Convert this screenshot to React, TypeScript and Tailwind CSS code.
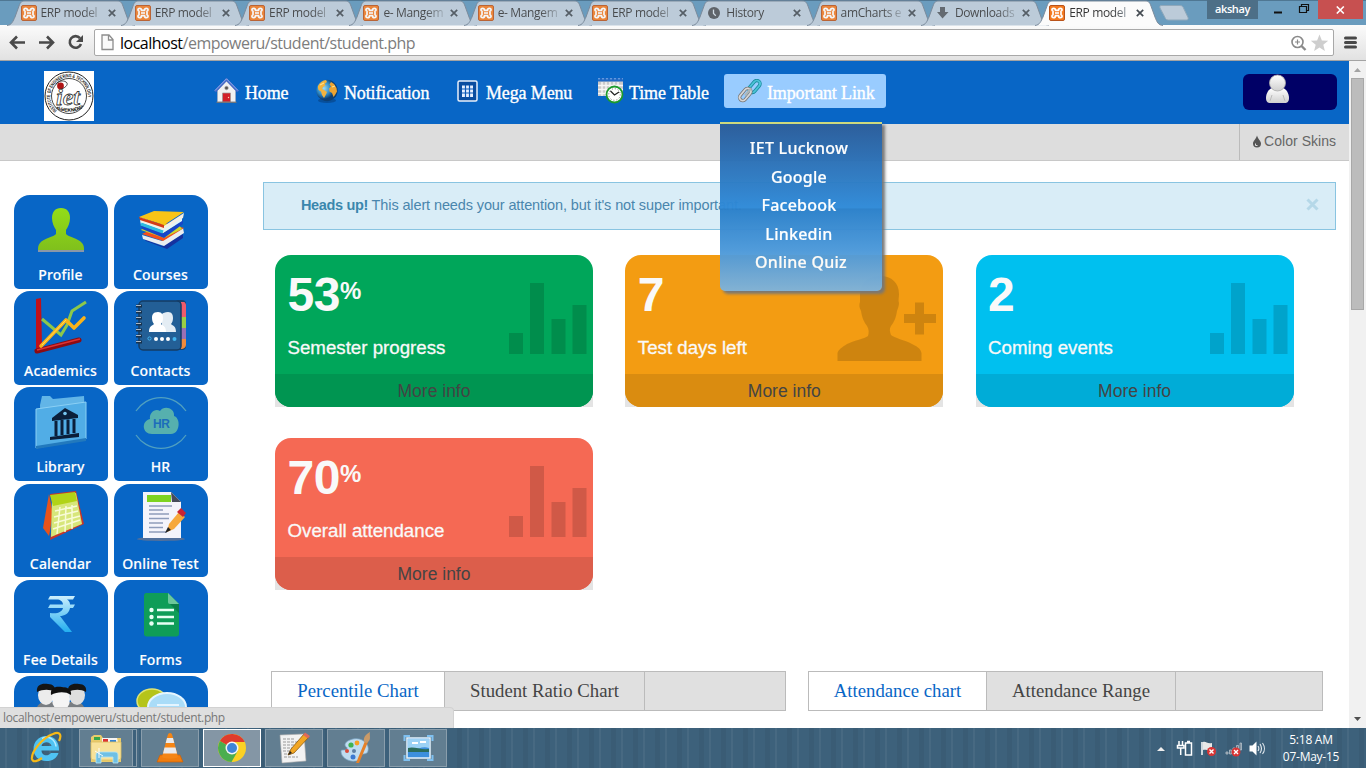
import React from "react";

type Kids = { children?: React.ReactNode };

const TAB_SHAPE = "M-1 25.5 C4 25 5 21 7 17 L11 6 C12.500 2 13.500 1 17 1 L109 1 C112.500 1 113.500 2 115 6 L119 17 C121 22 122 25 127 25.500";

function XamppIcon() {
  return (
    <svg width="16" height="16" viewBox="0 0 16 16" className="shrink-0">
      <rect x=".5" y=".5" width="15" height="15" rx="1.5" fill="#f47a20" stroke="#b9531a" />
      <path d="M4.500 3.300c-2 0-2 2.400-.5 3v3.400c-1.500.6-1.500 3 .5 3 1.300 0 2-1 2-2h3c0 1 .7 2 2 2 2 0 2-2.400.5-3V6.300c1.500-.6 1.500-3-.5-3-1.300 0-2 1-2 2h-3c0-1-.7-2-2-2z" fill="none" stroke="#fff" strokeWidth="1.700" />
      <path d="M6 8h4" stroke="#fff" strokeWidth="1.600" />
    </svg>
  );
}

function ClockIcon() {
  return (
    <svg width="16" height="16" viewBox="0 0 16 16" className="shrink-0">
      <circle cx="8" cy="8" r="6" fill="#4f5357" />
      <path d="M7.500 4.500v4l2.300 2.200" stroke="#d5dee6" strokeWidth="1.300" fill="none" />
    </svg>
  );
}

function DownIcon() {
  return (
    <svg width="16" height="16" viewBox="0 0 16 16" className="shrink-0">
      <path d="M5 2h5v5h3.500L7.500 13.500 2 7h3z" fill="#555a5f" />
    </svg>
  );
}

function CloseX() {
  return (
    <svg width="8" height="8" viewBox="0 0 8 8" className="shrink-0">
      <path d="M.8.8l6.400 6.400M7.200.8L.8 7.200" stroke="#444b52" strokeWidth="1.700" />
    </svg>
  );
}

const tabs = [
  { t: "ERP model", i: "x" },
  { t: "ERP model", i: "x" },
  { t: "ERP model", i: "x" },
  { t: "e- Mangem", i: "x" },
  { t: "e- Mangem", i: "x" },
  { t: "ERP model", i: "x" },
  { t: "History", i: "c" },
  { t: "amCharts e", i: "x" },
  { t: "Downloads", i: "d" },
  { t: "ERP model", i: "x", active: true },
];

function TabStrip() {
  return (
    <div className="flex h-[25px] w-full shrink-0 border-t border-[#4f7793] bg-[#6a9cbe] pl-[7.500px] font-['Open_Sans','Noto_Sans',sans-serif]">
      {tabs.map((tab, n) => (
        <div key={n} className="relative flex h-[24px] w-[114.3px] shrink-0 items-center pl-[13px]">
          <svg className="absolute -top-px left-0 overflow-visible" width="126" height="26" viewBox="0 0 126 26">
            <path d={TAB_SHAPE} fill={tab.active ? "#fbfbfb" : "#bccbd9"} stroke="#7b8b9c" strokeWidth="1" />
          </svg>
          <div className={tab.active ? "relative flex items-center" : "relative flex items-center opacity-85"}>
            {tab.i === "x" ? <XamppIcon /> : tab.i === "c" ? <ClockIcon /> : <DownIcon />}
            <span className="ml-[4px] w-[60px] overflow-hidden bg-gradient-to-r from-[#333] from-70% to-[#9aa6b1] bg-clip-text text-[12px] leading-[16px] tracking-[-0.350px] whitespace-nowrap text-transparent">
              {tab.t}
            </span>
            <span className="ml-[7px]"><CloseX /></span>
          </div>
        </div>
      ))}
      <svg width="44" height="24" viewBox="0 0 44 24" className="shrink-0">
        <path d="M9.500 4.500h19c2 0 3 1 3.500 2.500l4.500 9.500c.5 1.500 0 2.500-1.500 2.500H17c-2 0-3-1-3.500-2.500L8.500 7c-.5-1.500 0-2.500 1-2.500z" transform="translate(1.500 0)" fill="#bccbd9" stroke="#8fa8bb" />
      </svg>
      <div className="-mt-px ml-[12.500px] flex h-[19px] w-[51px] items-center justify-center bg-[#4d6f87] text-[11px] font-semibold tracking-[-0.400px] text-white">
        akshay
      </div>
      <svg width="60" height="19" viewBox="0 0 60 19" className="shrink-0">
        <path d="M16 11.500h8" stroke="#111" strokeWidth="2" />
        <path d="M41.500 5.500h7v6h-7zM43.500 5v-1.500h7v6H49" stroke="#111" fill="none" strokeWidth="1.200" />
      </svg>
      <div className="-mt-px flex h-[19px] w-[45px] shrink-0 items-center justify-center bg-[#c75050]">
        <svg width="9" height="8" viewBox="0 0 9 8"><path d="M.8.5l7 7M7.800.5l-7 7" stroke="#fff" strokeWidth="1.600" /></svg>
      </div>
    </div>
  );
}

function Toolbar() {
  return (
    <div className="flex h-[36px] w-full shrink-0 items-center border-b border-[#a3a3a3] bg-gradient-to-b from-[#fbfbfb] to-[#e2e2e2] font-['Open_Sans','Noto_Sans',sans-serif]">
      <svg width="94" height="35" viewBox="0 0 94 35" className="shrink-0">
        <g fill="none" stroke="#4a4a4a" strokeWidth="2.600">
          <path d="M25 17.500H12M17 11.500l-6 6 6 6" />
          <path d="M39 17.500h13M47 11.500l6 6-6 6" />
          <path d="M80 13.200a5.800 5.800 0 1 0 1 5.800" />
        </g>
        <path d="M83 10v7h-7z" fill="#4a4a4a" />
      </svg>
      <div className="flex h-[27px] w-[1240px] shrink-0 items-center rounded-[2px] border border-[#a8a8a8] bg-white pl-[6px]">
        <svg width="13" height="17" viewBox="0 0 13 17"><path d="M1 1h7l4 4.500v10H1zM7.500 1v5H12" fill="#fafafa" stroke="#8d8d8d" strokeWidth="1.300" /></svg>
        <span className="ml-[6px] text-[16px] leading-[22px] tracking-[-0.500px] text-[#7d7d7d]">
          <span className="text-black">localhost</span>/empoweru/student/student.php
        </span>
        <svg width="44" height="20" viewBox="0 0 44 20" className="mr-[2px] ml-auto">
          <circle cx="10.500" cy="9" r="5.500" fill="none" stroke="#8a8a8a" strokeWidth="1.600" />
          <path d="M14.500 13l4 4" stroke="#8a8a8a" strokeWidth="2.400" />
          <path d="M8 9h5M10.500 6.500v5" stroke="#8a8a8a" strokeWidth="1.200" />
          <path d="M32.500 1.500l2.400 5.900 6.300.4-4.900 4 1.600 6.200-5.400-3.400-5.400 3.400 1.600-6.200-4.900-4 6.300-.4z" fill="#cecece" />
        </svg>
      </div>
      <svg width="32" height="35" viewBox="0 0 32 35">
        <path d="M11.500 13h10M11.500 17.500h10M11.500 22h10" stroke="#484848" strokeWidth="3" strokeLinecap="round" />
      </svg>
    </div>
  );
}

function IetLogo() {
  return (
    <svg width="50" height="50" viewBox="0 0 50 50" className="shrink-0">
      <rect width="50" height="50" fill="#fff" />
      <circle cx="25" cy="25" r="24" fill="none" stroke="#222" strokeWidth="1" />
      <circle cx="25" cy="25" r="17.500" fill="none" stroke="#333" strokeWidth=".9" />
      <defs><path id="ring" d="M25 43.700 a18.700 18.700 0 1 1 .1 0" /></defs>
      <text fontSize="5" fontWeight="bold" fontFamily="Liberation Sans, sans-serif" fill="#111">
        <textPath href="#ring" startOffset="13" textLength="76" lengthAdjust="spacingAndGlyphs">INSTITUTE OF ENGINEERING &amp; TECHNOLOGY</textPath>
      </text>
      <defs><path id="ringLow" d="M7.500 34 A23 19.500 0 0 0 42.500 34" /></defs>
      <text fontSize="5" fontWeight="bold" fontFamily="Liberation Sans, sans-serif" fill="#111">
        <textPath href="#ringLow" startOffset="6" textLength="29">•LUCKNOW•</textPath>
      </text>
      <circle cx="16.500" cy="15" r="3.400" fill="#b01515" />
      <path d="M12 13c2-3 7-4 10-2s0 5-4 7" fill="none" stroke="#222" strokeWidth=".8" />
      <text x="12" y="34" fontSize="24" fontStyle="italic" fontWeight="bold" fontFamily="Liberation Serif, serif" fill="#fff" stroke="#333" strokeWidth=".8">iet</text>
      <path d="M12 37c8 2.500 18 2.500 26 0" stroke="#444" strokeWidth="1" strokeDasharray="2 1" fill="none" />
    </svg>
  );
}

function HomeIcon() {
  return (
    <svg width="25" height="26" viewBox="0 0 25 26">
      <path d="M3.500 12.500L12.500 3l9 9.500V24h-18z" fill="#f1f1f1" stroke="#aab" strokeWidth=".6" />
      <path d="M1 13.500L12.500 1.500 24 13.500" fill="none" stroke="#4468c8" strokeWidth="2.400" />
      <path d="M1 12.500L12.500.8 24 12.500" fill="none" stroke="#a9c0f5" strokeWidth=".8" />
      <circle cx="12.500" cy="10" r="1.800" fill="#555" stroke="#aaa" strokeWidth=".6" />
      <path d="M8.500 15h8v9h-8z" fill="#d21f28" stroke="#999" strokeWidth=".7" />
      <circle cx="14.500" cy="19.500" r=".7" fill="#ffd0b0" />
      <path d="M2.500 24.300h20" stroke="#777" strokeWidth="1.200" />
    </svg>
  );
}

function GlobeIcon() {
  return (
    <svg width="23" height="25" viewBox="0 0 23 25">
      <defs><radialGradient id="gl" cx=".35" cy=".4"><stop offset="0" stopColor="#9edcf4" /><stop offset=".6" stopColor="#2f8cc9" /><stop offset="1" stopColor="#0c3f74" /></radialGradient></defs>
      <ellipse cx="11" cy="21.500" rx="9" ry="2.500" fill="#06407f" opacity=".6" />
      <circle cx="11" cy="11.500" r="10.700" fill="url(#gl)" />
      <path d="M2 7C4 3 7 1.500 10 1l1 2-2.500 2 1 1.500-2.500 1.500-1 2 2 1 3 2-1 2.500-2 3.500-2-3-1-3.500-2.500-1.500-.5-2z" fill="#f2b33d" />
      <path d="M15 3l3 2 2.500 4 .5 3.500-2 3.500-1.500 2-1.500-4-2.500-1.500-.5-3 2-2-1.500-2z" fill="#eda431" />
      <path d="M4 6l4-2M16 8l3-1" stroke="#ffe28a" strokeWidth="1.200" />
    </svg>
  );
}

function GridIcon() {
  return (
    <svg width="21" height="22" viewBox="0 0 21 22">
      <rect x="1" y="1" width="19" height="20" rx="1.500" fill="#0a4da0" stroke="#e9f0fa" strokeWidth="1.500" />
      <path d="M5 5.500h11v11.500H5z" fill="#e7f0ff" />
      <path d="M8.500 5v12M12.500 5v12M4.500 9h12M4.500 13h12" stroke="#0a57b5" strokeWidth="1.200" />
    </svg>
  );
}

function TimeIcon() {
  return (
    <svg width="26" height="26" viewBox="0 0 26 26">
      <path d="M0 1h25v17H0z" fill="#c9c9c9" />
      <path d="M0 0h25v3.500H0z" fill="#1f68c5" />
      <path d="M0 7.500h25M0 11.500h25M0 15.500h25M4 4v14M8 4v14M12 4v14M16 4v14M20 4v14" stroke="#f6f6f6" strokeWidth="1.400" />
      <path d="M0 .8h25" stroke="#7faee8" strokeWidth="1" strokeDasharray="2 2" />
      <circle cx="16.500" cy="16.500" r="8" fill="#fff" stroke="#1c9a2c" strokeWidth="1.800" />
      <circle cx="16.500" cy="16.500" r="5.800" fill="none" stroke="#777" strokeWidth="1" strokeDasharray="1 2" />
      <path d="M12.500 13l4 4 4.500-3" stroke="#222" strokeWidth="1.300" fill="none" />
    </svg>
  );
}

function LinkIcon() {
  return (
    <svg width="26" height="25" viewBox="0 0 26 25" fill="none">
      <rect x="-3.200" y="-6.800" width="6.400" height="13.600" rx="3.200" transform="translate(17.500 7.500) rotate(40)" stroke="#168a9d" strokeWidth="3.400" />
      <rect x="-3.200" y="-6.800" width="6.400" height="13.600" rx="3.200" transform="translate(17.500 7.500) rotate(40)" stroke="#4cc3d5" strokeWidth="1.800" />
      <rect x="-3.200" y="-7" width="6.400" height="14" rx="3.200" transform="translate(8.200 15.500) rotate(40)" stroke="#777" strokeWidth="3.400" />
      <rect x="-3.200" y="-7" width="6.400" height="14" rx="3.200" transform="translate(8.200 15.500) rotate(40)" stroke="#d7d7d7" strokeWidth="1.700" />
      <path d="M8 16.500l6-7" stroke="#aeb7b8" strokeWidth="2.200" />
    </svg>
  );
}

function NavItem({ w, iw, icon, children }: Kids & { w: string; iw: string; icon: React.ReactNode }) {
  return (
    <div className={`flex h-[34px] shrink-0 items-center ${w}`}>
      <span className={`flex shrink-0 items-center ${iw}`}>{icon}</span>
      <span className="pt-[4px] tracking-[-0.140px] whitespace-nowrap">{children}</span>
    </div>
  );
}

function Header() {
  return (
    <header className="flex h-[63px] shrink-0 items-start bg-[#0866c6] pt-[10px] pl-[44px]">
      <IetLogo />
      <nav className="mt-[3px] ml-[120px] flex font-['Liberation_Serif',serif] text-[18px] leading-[24px] text-white [-webkit-text-stroke:0.350px_white]">
        <NavItem w="w-[102px]" iw="w-[31px]" icon={<HomeIcon />}>Home</NavItem>
        <NavItem w="w-[141px]" iw="w-[28px]" icon={<GlobeIcon />}>Notification</NavItem>
        <NavItem w="w-[141px]" iw="w-[29px]" icon={<GridIcon />}>Mega Menu</NavItem>
        <NavItem w="w-[126px]" iw="w-[31px]" icon={<TimeIcon />}>Time Table</NavItem>
        <div className="relative w-[162px] rounded-[3px] bg-[#99ccff] pl-[13px]">
          <NavItem w="w-[149px]" iw="w-[30px]" icon={<LinkIcon />}>Important Link</NavItem>
          <ul className="absolute top-[48px] -left-[4px] z-20 h-[169px] w-[162px] rounded-b-[5px] border-t-2 border-[#d5dd7c] bg-[linear-gradient(to_bottom,#285c9b_0%,#2f8ad8_50%,#2a80ca_51%,#4b98d9_75%,#80b3da_100%)] pt-[10px] text-center font-['Noto_Sans','Open_Sans',sans-serif] text-[16px] leading-[28.500px] font-medium tracking-[0.250px] opacity-[.97] shadow-[3px_3px_3px_#777] [-webkit-text-stroke:0.200px_white]">
            <li className="pr-[4px]">IET Lucknow</li>
            <li className="pr-[4px]">Google</li>
            <li className="pr-[4px]">Facebook</li>
            <li className="pr-[4px]">Linkedin</li>
            <li>Online Quiz</li>
          </ul>
        </div>
      </nav>
      <div className="mt-[3px] mr-[12px] ml-auto h-[36px] w-[94px] rounded-[6px] bg-[#000066] pl-[22px]">
        <svg width="25" height="30" viewBox="0 0 25 30">
          <defs><linearGradient id="us" x1="0" y1="0" x2="0" y2="1"><stop offset="0" stopColor="#fff" /><stop offset="1" stopColor="#cfcfcf" /></linearGradient></defs>
          <path d="M1 24c0-5 3-9 6-10h11c3 1 6 5 6 10 0 4-2 5-4 5H5c-2 0-4-1-4-5z" fill="url(#us)" />
          <path d="M5 27l2-6M20 27l-2-6" stroke="#bbb" />
          <circle cx="12.500" cy="9" r="8" fill="url(#us)" stroke="#a8a8a8" strokeWidth=".8" />
        </svg>
      </div>
    </header>
  );
}

/* ---------- sidebar icons, drawn on a 60x60 grid ---------- */
const icons: Record<string, React.ReactNode> = {
  Profile: (
    <>
      <defs><linearGradient id="pf" x1="0" y1="0" x2="0" y2="1"><stop offset="0" stopColor="#93dd18" /><stop offset="1" stopColor="#80c01c" /></linearGradient></defs>
      <path d="M7 51h46v2H7z" fill="#8a97a8" />
      <path d="M30 9c6 0 9 4 9 10 0 5-2 9-4 12v4c2 3 12 4 16 9 2 2 2 5 2 7H7c0-2 0-5 2-7 4-5 14-6 16-9v-4c-2-3-4-7-4-12 0-6 3-10 9-10z" fill="url(#pf)" />
    </>
  ),
  Courses: (
    <g transform="translate(1 -1)">
      <path d="M12 41l18 7 21-12v4L35 51l-21-8z" fill="#15329f" />
      <path d="M10 37l20 6 21-13 1 5-20 13-21-7z" fill="#e9edf0" />
      <path d="M10 36l21 7 21-13-19-5z" fill="#f4501c" />
      <path d="M9 32l23 8 18-9-3-4-30-2z" fill="#c9d82b" />
      <path d="M9 26l22 9 20-13v4L32 40 10 31z" fill="#1746c8" />
      <path d="M8 22l23 9 19-12v4L31 35 9 27z" fill="#dff5fa" />
      <path d="M9 26l22 8" stroke="#2dbadf" strokeWidth="3" />
      <path d="M8 19l24 9 20-13-1 5-20 12-22-8z" fill="#f4efe3" />
      <path d="M7 19l15-6 30 1-20 13z" fill="#f8c416" />
      <path d="M7 19l25 8v3L8 22z" fill="#d43b16" />
    </g>
  ),
  Academics: (
    <>
      <path d="M5 4l5-1 1 48-6 6z" fill="#c01018" />
      <path d="M6 56l42-11" stroke="#8d0b12" strokeWidth="5" strokeLinecap="round" />
      <path d="M6 55l43-11" stroke="#d33" strokeWidth="1.500" />
      <path d="M11 24l19 16 6-10 5-14L55 7" fill="none" stroke="#8cc84b" strokeWidth="3" />
      <path d="M10 51l25-26 8 8 10-10" fill="none" stroke="#f9b31a" strokeWidth="3.600" strokeLinejoin="round" strokeLinecap="round" />
      <path d="M11 50l24-25" stroke="#ffe057" strokeWidth="1" />
    </>
  ),
  Contacts: (
    <>
      <rect x="44" y="5" width="11" height="50" rx="4" fill="#16436f" />
      <path d="M50 7h3c1 0 2 2 2 3v12h-5z" fill="#ee5b6c" />
      <path d="M50 22h5v11h-5z" fill="#9bcf45" /><path d="M50 33h5v11h-5z" fill="#9a70b5" /><path d="M50 44h5v6c0 2-2 4-5 4z" fill="#f08b3e" />
      <rect x="8" y="6" width="42" height="49" rx="4" fill="#235f96" stroke="#153c64" strokeWidth="1.500" />
      <path d="M5 11h6M5 17h6M5 23h6M5 29h6M5 35h6M5 41h6M5 47h6" stroke="#17324e" strokeWidth="3" />
      <path d="M5 10.500h5M5 16.500h5M5 22.500h5M5 28.500h5M5 34.500h5M5 40.500h5M5 46.500h5" stroke="#a9b7c5" strokeWidth="1" />
      <path d="M37 17c4 0 5 3 5 6s-1 5-2 6c2 2 5 2 5 8H31V19c1-1 3-2 6-2z" fill="#e4edf4" />
      <path d="M27 17c4 0 5 3 5 6s-1 5-2 6c2 2 5 2 5 8H18c0-6 3-6 5-8-1-1-2-3-2-6s1-6 6-6z" fill="#fff" />
      <circle cx="25" cy="44" r="2" fill="#fff" /><circle cx="31" cy="44" r="2" fill="#fff" /><circle cx="37" cy="44" r="2" fill="#fff" /><circle cx="43.500" cy="44" r="2" fill="#42b4ee" /><circle cx="18.500" cy="43.500" r="1.600" fill="none" stroke="#42b4ee" />
    </>
  ),
  Library: (
    <>
      <path d="M9 14l2-9h8l3 3 31-3 2 44-45 5z" fill="#62b5e7" />
      <path d="M5 18l50-7v37L5 57z" fill="#51ade6" stroke="#8bd0f5" strokeWidth="1" />
      <path d="M5 55l50-8v3L5 58z" fill="#2279bd" />
      <path d="M21 27L34 17l13 7v3l-26 3z" fill="#0b1f3a" />
      <circle cx="34" cy="22.500" r="1.800" fill="#77c6ef" />
      <path d="M25 30v15M31 29v15M37 28.500V43M43 28v14" stroke="#0b1f3a" strokeWidth="3" />
      <path d="M19 46l29-4v4l-29 3z" fill="#0b1f3a" />
    </>
  ),
  HR: (
    <>
      <path d="M5 20a30 30 0 0 1 50 0M5 44a30 30 0 0 0 50 0" fill="none" stroke="#4f9fc0" strokeWidth="1.300" />
      <path d="M21 43c-10 0-11-13-2-15-1-6 5-11 10-8 4-6 15-3 14 5 7 2 6 18-3 18z" fill="#56b0ae" />
      <text x="22" y="37" fontSize="12" fontWeight="bold" fontFamily="Liberation Sans, sans-serif" fill="#1c6dbb" textLength="17">HR</text>
    </>
  ),
  Calendar: (
    <g transform="translate(1 1)">
      <path d="M17 5l-6 34 6 8 4-22z" fill="#e8531b" />
      <path d="M18 5l26-3 8 33-34 16 4-30z" fill="#c8352a" />
      <path d="M20 8l24-4 6 31-31 13z" fill="#d7e67a" />
      <path d="M18 6l25-3 2 9-24 5z" fill="#b1d317" />
      <path d="M23 22l22-5M22 28l24-6M22 34l26-7M21 40l27-9M28 18l-3 27M34 17l-1 26M40 16v24" stroke="#f8fbd8" strokeWidth="1.500" />
    </g>
  ),
  "Online Test": (
    <g transform="translate(0 2)">
      <ellipse cx="30" cy="49" rx="24" ry="2" fill="#52709c" />
      <path d="M12 2h28l10 10v36H12z" fill="#f4f4fb" />
      <path d="M40 2l10 10H41z" fill="#474c5b" />
      <path d="M16 5h24v7H16z" fill="#7ed321" />
      <path d="M18 16h23M18 20h14M18 24h20M18 28.500h20M18 33h14M18 37.500h14M18 42h18" stroke="#8e9cbb" strokeWidth="1.600" />
      <path d="M36 42l2-8 10-12 6 5-11 12z" fill="#f6a83c" />
      <path d="M46 22l4-4 5 5-3 4z" fill="#c92333" />
      <path d="M34 43l3-6 3 3z" fill="#222" />
    </g>
  ),
  "Fee Details": (
    <>
      <defs><linearGradient id="fe" x1="0" y1="0" x2="0" y2="1"><stop offset="0" stopColor="#cdeffc" /><stop offset="1" stopColor="#22aef0" /></linearGradient></defs>
      <path d="M19 12h25l-2 3.500h-6c2 1 3 3 3 5h5l-2 3.500h-3c-1 6-6 8-10 8l12 16h-7L19 33v-4c8 1 12-1 13-5H17l2-3.500h13c0-3-3-5-6-5h-9z" fill="url(#fe)" />
    </>
  ),
  Forms: (
    <>
      <path d="M15 9h22l11 11v30c0 1.500-1 2.500-2.500 2.500h-30C14 52.500 13 51.500 13 50V11.500C13 10 14 9 15 9z" fill="#0f9d58" />
      <path d="M37 9l11 11H39c-1.500 0-2-1-2-2z" fill="#6bc79b" />
      <path d="M39 20h9v9z" fill="#0a7d49" />
      <path d="M26 26h17M26 33h17M26 39.500h17" stroke="#e8fff4" strokeWidth="2.400" />
      <circle cx="20.500" cy="26" r="2.200" fill="#e8fff4" /><circle cx="20.500" cy="33" r="2.200" fill="#e8fff4" /><circle cx="20.500" cy="39.500" r="2.200" fill="#e8fff4" />
    </>
  ),
  Groups: (
    <g transform="translate(0 1)">
      <path d="M5 32c0-9 5-11 10-11h30c5 0 9 3 9 11z" fill="#787d82" />
      <ellipse cx="15" cy="14" rx="8" ry="10" fill="#ececec" /><ellipse cx="46" cy="14" rx="8" ry="10" fill="#dedede" />
      <path d="M6 11c-1-8 6-9 11-8 5 0 8 3 7 8-5-3-12-3-18 0zM37 11c-1-8 6-9 11-8 5 0 8 3 7 8-5-3-12-3-18 0z" fill="#151515" />
      <ellipse cx="30" cy="18" rx="9" ry="12" fill="#f5f5f5" />
      <path d="M20 14c-1-8 5-9 11-8 6 0 10 3 9 8-6-4-14-3-20 0z" fill="#111" />
    </g>
  ),
  Chat: (
    <g transform="translate(0 1)">
      <ellipse cx="21" cy="20" rx="15" ry="12" fill="#b5c41a" stroke="#e1e573" strokeWidth="1.500" />
      <ellipse cx="36" cy="26" rx="19" ry="14" fill="#a9dcf8" stroke="#e4f5ff" strokeWidth="2" />
      <path d="M26 24h22" stroke="#e4f5ff" strokeWidth="2" />
    </g>
  ),
};

function Sidebar() {
  return (
    <aside className="grid w-[194px] shrink-0 grid-cols-[94px_94px] content-start gap-x-[6px] gap-y-[2.700px] pt-[34px] font-['Noto_Sans','Open_Sans',sans-serif]">
      {Object.keys(icons).map((name) => (
        <div key={name} className="flex h-[93.500px] flex-col items-center rounded-t-[16px] rounded-b-[5px] bg-[#0866c6] pt-[4px]">
          <svg width="60" height="60" viewBox="0 0 60 60" className="shrink-0">{icons[name]}</svg>
          <span className="mt-[6px] pr-px text-[14px] leading-[19px] font-medium tracking-[0.150px] whitespace-nowrap text-white [-webkit-text-stroke:0.150px_white]">
            {name === "Groups" || name === "Chat" ? "" : name}
          </span>
        </div>
      ))}
    </aside>
  );
}

function Bars() {
  return (
    <svg width="78" height="72" viewBox="0 0 78 72" fill="#000" fillOpacity=".15">
      <path d="M0 50h14v21H0zM21 0h14v71H21zM42.500 36h14v35h-14zM63.500 22h14v49h-14z" />
    </svg>
  );
}

function PersonAdd() {
  return (
    <svg width="100" height="88" viewBox="0 0 100 88" fill="#000" fillOpacity=".15">
      <path d="M43 1c12 0 19 7 19 18 0 4-1 6 0 9 0 3-1 5-2 8-1 7-3 11-6 15-2 3-1 6 0 9 3 3 14 5 21 9 7 3 9 6 9.500 9v8H.5v-8C1 75 5 72 10 69c8-4 17-5 21-8 1-3 1-7-1-10-3-4-5-8-6-15-2-4-2-6-1-9V19C23 8 31 1 43 1z" />
      <path d="M78 27.500h9V39h12v9H87v11.500h-9V48H67v-9h11z" />
    </svg>
  );
}

function Card({ num, pct, label, bg, foot, person }: { num: string; pct?: boolean; label: string; bg: string; foot: string; person?: boolean }) {
  return (
    <div className="h-[152px] w-[318px] bg-[linear-gradient(to_bottom,transparent_50%,#e4e4e4_50%)] font-['Liberation_Sans',Arial,sans-serif]">
      <div className={`flex h-full flex-col overflow-hidden rounded-[16px] ${bg}`}>
        <div className="flex h-[119px] justify-between pl-[12.500px]">
          <div className="pt-[12px] text-[#f9f9f9]">
            <div className="flex h-[56px] items-start">
              <span className="text-[48px] leading-[56px] font-bold tracking-[-0.500px]">{num}</span>
              {pct && <span className="pt-[10px] text-[24px] leading-[28px] font-bold">%</span>}
            </div>
            <div className="mt-[13px] text-[18.700px] leading-[24px] whitespace-nowrap [-webkit-text-stroke:0.300px_#f9f9f9]">{label}</div>
          </div>
          <div className={person ? "pt-[20px] pr-[6px]" : "pt-[28px] pr-[6px]"}>{person ? <PersonAdd /> : <Bars />}</div>
        </div>
        <div className={`flex h-[33px] items-center justify-center pt-[2px] text-[17.500px] text-[#444] ${foot}`}>More info</div>
      </div>
    </div>
  );
}

function ChartTabs({ a, b, wa, wb }: { a: string; b: string; wa: string; wb: string }) {
  return (
    <div className="flex h-[40px] w-[515px] border border-[#bbb] bg-[#e0e0e0] font-['Liberation_Serif',serif] text-[18.750px]">
      <div className={`flex items-center justify-center border-r border-[#bbb] bg-white whitespace-nowrap text-[#0866c6] ${wa}`}>{a}</div>
      <div className={`flex items-center justify-center border-r border-[#bbb] whitespace-nowrap text-[#444] ${wb}`}>{b}</div>
    </div>
  );
}

function Page() {
  return (
    <div className="flex w-[1349px] shrink-0 flex-col overflow-hidden bg-white">
      <Header />
      <div className="flex h-[37px] shrink-0 justify-end border-b border-[#c8c8c8] bg-[#ddd] font-['Liberation_Sans',Arial,sans-serif]">
        <div className="flex w-[110px] items-center border-l border-[#bbb] pb-[2px] pl-[12px] text-[14px] text-[#666]">
          <svg width="10" height="13" viewBox="0 0 10 13" className="mr-[2px]">
            <path d="M5 .5c1 3.500 4 5.500 4 8a4 4 0 0 1-8 0c0-2.500 3-4.500 4-8z" fill="#555" /><path d="M3.500 8.500v2h2" stroke="#ddd" fill="none" />
          </svg>
          <span className="tracking-[0.050px] whitespace-nowrap">Color Skins</span>
        </div>
      </div>
      <div className="flex min-h-0 grow overflow-hidden pl-[14px]">
        <Sidebar />
        <main className="ml-[55px] w-[1073px] shrink-0 pt-[21px]">
          <div className="flex h-[48px] items-center border border-[#89c4e1] bg-[#d9edf7] pr-[16px] pl-[37px] font-['Liberation_Sans',Arial,sans-serif] text-[14.500px] tracking-[-0.120px] text-[#4a86ad]">
            <span className="whitespace-nowrap"><b className="tracking-[-0.350px] text-[#3a87ad]">Heads up!</b> This alert needs your attention, but it's not super important.</span>
            <svg width="13" height="13" viewBox="0 0 13 13" className="-mt-[3px] ml-auto"><path d="M1.500 1.500l10 10M11.500 1.500l-10 10" stroke="#b5d8e8" strokeWidth="3" /></svg>
          </div>
          <div className="mt-[25px] ml-[12px] grid grid-cols-[318px_318px_318px] gap-x-[32.300px] gap-y-[31px]">
            <Card num="53" pct label="Semester progress" bg="bg-[#00a65a]" foot="bg-[#009551]" />
            <Card num="7" label="Test days left" bg="bg-[#f39c12]" foot="bg-[#da8c10]" person />
            <Card num="2" label="Coming events" bg="bg-[#00c0ef]" foot="bg-[#00acd7]" />
            <Card num="70" pct label="Overall attendance" bg="bg-[#f56954]" foot="bg-[#dc5e4b]" />
          </div>
          <div className="mt-[81px] ml-[8px] flex gap-[22px]">
            <ChartTabs a="Percentile Chart" b="Student Ratio Chart" wa="w-[173px]" wb="w-[200px]" />
            <ChartTabs a="Attendance chart" b="Attendance Range" wa="w-[178px]" wb="w-[189px]" />
          </div>
        </main>
      </div>
    </div>
  );
}

function Scrollbar() {
  return (
    <div className="flex w-[17px] flex-col items-center justify-between bg-[#f1f1f1]">
      <div className="flex flex-col items-center">
        <svg width="17" height="17" viewBox="0 0 17 17"><path d="M5 11l3.500-4 3.500 4z" fill="#a3a3a3" /></svg>
        <div className="h-[232px] w-[13px] border border-[#a8a8a8] bg-[#bcbcbc]" />
      </div>
      <svg width="17" height="17" viewBox="0 0 17 17"><path d="M5 6h7l-3.500 4z" fill="#505050" /></svg>
    </div>
  );
}

function TaskButton({ children, active }: Kids & { active?: boolean }) {
  return (
    <div className={active
      ? "flex h-[38px] w-[58px] items-center justify-center border border-white bg-[#8496a5]"
      : "flex h-[38px] w-[58px] items-center justify-center border border-[#8a9eac] bg-[#627e91]"}>
      {children}
    </div>
  );
}

function Taskbar() {
  return (
    <div className="flex h-[40px] shrink-0 items-center bg-[#3d617b] bg-[repeating-linear-gradient(to_right,transparent_0px,transparent_5px,rgba(255,255,255,.05)_5px,rgba(255,255,255,.05)_7px,transparent_7px,transparent_17px,rgba(0,0,0,.05)_17px,rgba(0,0,0,.05)_22px)] font-['Open_Sans','Noto_Sans',sans-serif]">
      <svg width="34" height="34" viewBox="0 0 34 34" className="ml-[29px]">
        <path d="M17.500 5c8 0 13 6 12.500 14.500H12.500c0 5 6 6.500 9.500 2.500h7.500c-2 5.500-6 8-12 8C9.500 30 4.500 25 4.500 18S9.500 5 17.500 5zm-5 10h10c-1-5-9-5-10 0z" fill="#4fc3f3" />
        <path d="M13 7.500c6-3 13 0 14 8" stroke="#b2eaff" strokeWidth="1.500" fill="none" />
        <path d="M30 10c3-6 1-10-6-7C13 7 2 21 3 28c1 4 6 2 10-1" fill="none" stroke="#f7b917" strokeWidth="2.200" />
      </svg>
      <div className="ml-[16px] flex h-[38px] w-[58px] border-y border-r border-[#8a9eac]">
        <div className="flex w-[54px] items-center justify-center border-x border-[#8a9eac] bg-[#627e91]">
          <svg width="33" height="31" viewBox="0 0 33 31">
            <path d="M1 4l3-2h7l2 3h18v24H1z" fill="#e9cb6b" /><path d="M4 4h6v3H4z" fill="#35a64a" /><path d="M12 5h15l1 4H12z" fill="#f4f4f4" /><path d="M13 6h5v3h-5z" fill="#d33" /><path d="M20 7h6v3h-6z" fill="#3584d4" />
            <path d="M1 9h30v15c0 2-1 3-3 3H4c-2 0-3-1-3-3z" fill="#f7e29a" stroke="#dcbf60" strokeWidth=".8" />
            <path d="M6 30V22c0-2 1-3 3-3h16c2 0 3 1 3 3v8h-5v-6H11v6z" fill="#6fc0e4" stroke="#b5e6f8" strokeWidth=".8" />
            <path d="M9 15v10M5 18l8 5" stroke="#fff" strokeWidth=".9" />
          </svg>
        </div>
      </div>
      <div className="ml-[4px] flex gap-[4px]">
        <TaskButton>
          <svg width="28" height="32" viewBox="0 0 28 32">
            <path d="M4 23h20l3 7H1z" fill="#f07d0e" stroke="#c85f07" strokeWidth=".7" /><path d="M14 1c1.500 0 2 1 2.500 3L22 25c-2 2-14 2-16 0l5.500-21c.5-2 1-3 2.500-3z" fill="#f58514" />
            <path d="M11 6h6l1.300 5H9.700zM8.500 15.500h11l1.500 6H7z" fill="#e9eaec" />
          </svg>
        </TaskButton>
        <TaskButton active>
          <svg width="30" height="30" viewBox="0 0 30 30">
            <circle cx="15" cy="15" r="14" fill="#fbd124" />
            <path d="M15 15L2.900 8A14 14 0 0 1 27.700 9H15z" fill="#df3c2d" />
            <path d="M2.900 8A14 14 0 0 0 14.500 29l6-10.500L15 15z" fill="#4bae4f" />
            <circle cx="15" cy="15" r="6.500" fill="#f5f5f5" /><circle cx="15" cy="15" r="5" fill="#3f85d8" />
          </svg>
        </TaskButton>
        <TaskButton>
          <svg width="32" height="32" viewBox="0 0 32 32">
            <path d="M2 3l24-1 2 27-24 2z" fill="#f2f2f2" stroke="#aaa" strokeWidth=".6" />
            <path d="M5 7h12M5 10h17M5 13h14M5 16h12M5 19h8M6 22h7M6 25h14" stroke="#999" strokeWidth="1" strokeDasharray="3 1" />
            <path d="M10 23l3-6L26 2l5 3-15 16z" fill="#f2a623" stroke="#8a5a10" strokeWidth=".8" /><path d="M25 3l2-2.500 5 3.500-2 2.500z" fill="#e06a5a" /><path d="M10 23l2-4 2 2z" fill="#222" />
          </svg>
        </TaskButton>
        <TaskButton>
          <svg width="34" height="34" viewBox="0 0 34 34">
            <path d="M14 8c9-2 17 5 15 12-1 4-5 2-7 4s0 6-5 6C8 31 2 26 2 20c0-2 5 0 6-2s-2-2-2-4c0-3 4-5 8-6z" fill="#bfdcf0" stroke="#7ba6c6" strokeWidth=".7" />
            <circle cx="12" cy="14" r="2.600" fill="#3fb350" /><circle cx="18" cy="12" r="2.400" fill="#f6a124" /><circle cx="8" cy="20" r="2" fill="#d94b3a" /><circle cx="15" cy="20" r="2" fill="#5d7fa5" /><circle cx="14" cy="26" r="2.500" fill="#3b79d0" />
            <path d="M17 32l9-22 3 1-9 21z" fill="#e4812a" /><path d="M25 11c-1-6 3-8 6-10-1 4 2 7-3 11z" fill="#c99a68" />
          </svg>
        </TaskButton>
        <TaskButton>
          <svg width="31" height="28" viewBox="0 0 31 28">
            <path d="M4 4h23v20H4z" fill="#3c8fdd" stroke="#e4f2fc" strokeWidth="1.500" /><path d="M5 5h21v9c-7-3-12 3-21 1z" fill="#9cd2f5" /><path d="M5 14c6-2 12 2 21 1v3H5z" fill="#2b6c5c" /><path d="M9 9h6M17 8h6" stroke="#fff" strokeWidth="2" />
            <path d="M1.500 7V2H7M24 2h5.500v5M29.500 21v5H24M7 26H1.500v-5" fill="none" stroke="#7fc0f0" strokeWidth="2" />
          </svg>
        </TaskButton>
      </div>
      <svg width="112" height="24" viewBox="0 0 112 24" className="ml-auto">
        <path d="M3 15l4-4 4 4z" fill="#eee" />
        <g fill="none" stroke="#fff" strokeWidth="1.500">
          <path d="M31.500 7h6v12h-6zM33 5.500h3" /><path d="M25 5v4M28.500 5v4M23.500 9.500h6.500v2.500h-6.500zM26.700 12v7" />
        </g>
        <path d="M48 6v13" stroke="#fff" strokeWidth="1.500" /><path d="M49 6c3-1 4 2 9 1v7c-4 1-6-1-9 0z" fill="#e8e8e8" />
        <circle cx="57.500" cy="15.500" r="4.500" fill="#d93434" /><path d="M55.500 13.500l4 4M59.500 13.500l-4 4" stroke="#fff" strokeWidth="1.400" />
        <path d="M72 18v-2h2v2zM75.500 18v-4h2v4zM79 18v-6h2v6zM82.500 18V9.500h2V18zM86 14V7h1.500v7z" fill="#687a88" stroke="#c3cdd5" strokeWidth=".7" />
        <circle cx="82" cy="16" r="4.500" fill="#d93434" /><path d="M80 14l4 4M84 14l-4 4" stroke="#fff" strokeWidth="1.400" />
        <path d="M95.500 9.500h3l4-4v14l-4-4h-3z" fill="#fff" /><path d="M104 10c1 1.500 1 3.500 0 5M106 8c2 3 2 6 0 9M108.500 7c2.500 3.500 2.500 8 0 11" stroke="#e5ecf1" strokeWidth="1.100" fill="none" />
      </svg>
      <div className="mr-[25px] ml-[15px] w-[60px] pt-px text-center text-[12px] leading-[16.500px] tracking-[-0.250px] whitespace-nowrap text-white">
        5:18 AM<br />07-May-15
      </div>
    </div>
  );
}

export default function App() {
  return (
    <div className="relative flex h-[768px] w-[1366px] flex-col overflow-hidden">
      <TabStrip />
      <Toolbar />
      <div className="flex min-h-0 grow">
        <Page />
        <Scrollbar />
      </div>
      <div className="absolute bottom-[40px] left-0 flex h-[21px] w-[454px] items-center rounded-tr-[4px] border-t border-r border-[#d2d2d2] bg-[#dfdfdf] pl-[3px] font-['Open_Sans','Noto_Sans',sans-serif] text-[12px] tracking-[-0.360px] text-[#777]">
        localhost/empoweru/student/student.php
      </div>
      <Taskbar />
    </div>
  );
}
